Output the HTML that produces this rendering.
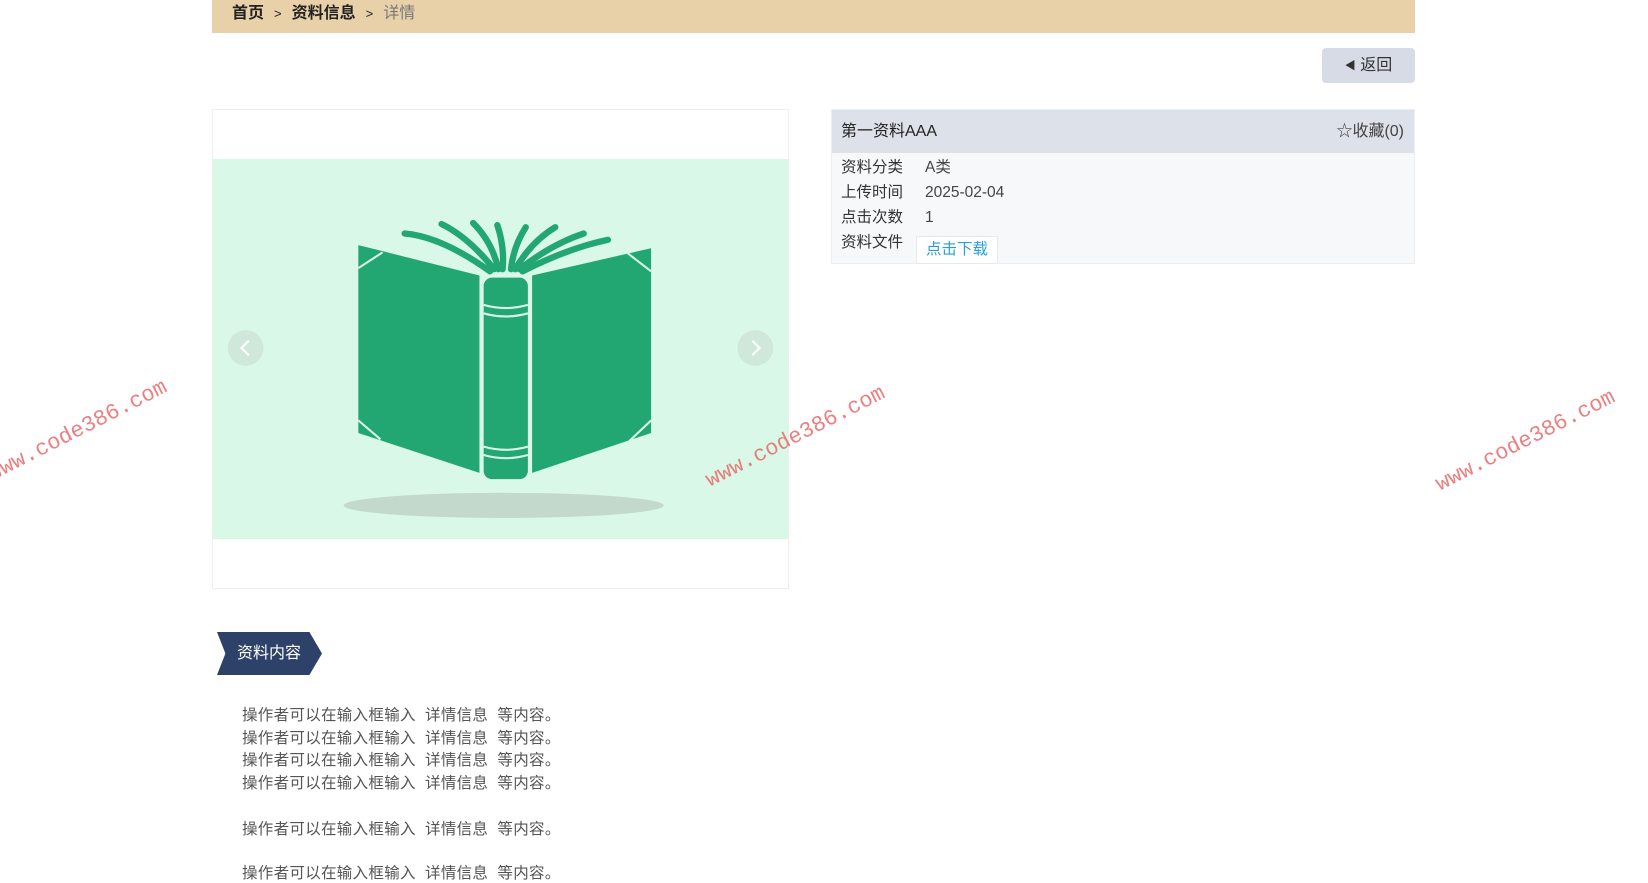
<!DOCTYPE html>
<html><head><meta charset="utf-8"><style>
*{margin:0;padding:0;box-sizing:border-box}
body{width:1648px;height:880px;background:#fff;font-family:"Liberation Sans","Noto Sans CJK SC",sans-serif;position:relative;overflow:hidden;color:#333}
.abs{position:absolute}
.bc{left:212px;top:0;width:1203px;height:33px;background:#e8d0a8;font-size:16px;line-height:28px;padding-left:20px;color:#222}
.bc b{font-weight:bold}
.bc span{margin:0 10px;font-size:13px}
.back{left:1322px;top:48px;width:93px;height:35px;background:#d6dbe6;border-radius:4px;font-size:16px;line-height:35px;text-align:center;color:#333}
.back small{font-size:11px;vertical-align:1px}
.imgp{left:212px;top:109px;width:577px;height:480px;border:1px solid #eee;background:#fff}
.card{left:831px;top:109px;width:584px;height:155px;background:#f7f8f9;border:1px solid #eceef2}
.hd{height:43px;background:#dde1e9;font-size:16px;line-height:43px;padding-left:9px;color:#222}
.hd i{position:absolute;right:10px;font-style:normal;color:#444}
.row{position:absolute;left:9px;font-size:15.5px;line-height:20px;color:#333}
.row em{font-style:normal;position:absolute;left:84px;top:0;white-space:nowrap;color:#444;line-height:20px}
.dl{left:916px;top:236px;width:82px;height:28px;background:#fff;border:1px solid #e6eaee;color:#2a9fd6;font-size:15.5px;line-height:26px;text-align:center;border-radius:2px}
.tt{left:217px;top:632px;width:105px;height:43px;background:#2e4168;clip-path:polygon(0 0,88% 0,100% 50%,88% 100%,0 100%,8% 50%);color:#fff;font-size:16px;line-height:43px;padding-left:20px}
.ct{left:242px;font-size:15.5px;color:#555;white-space:nowrap;letter-spacing:0.3px}
.wm{color:#e86a6a;font-size:22px;font-family:"Liberation Mono",monospace;transform:rotate(-27deg);transform-origin:left bottom;white-space:nowrap;opacity:.85}
</style></head><body>
<div class="abs bc"><b>首页</b><span>&gt;</span><b>资料信息</b><span>&gt;</span><i style="font-style:normal;color:#777">详情</i></div>
<div class="abs back"><small>&#9664;&#xFE0E;</small> 返回</div>
<div class="abs imgp">
<svg width="575" height="380" viewBox="203 151 546 362" preserveAspectRatio="none" style="position:absolute;left:0;top:49px">
<rect x="203" y="151" width="546" height="362" fill="#d9f8e7"/>
<ellipse cx="479" cy="481" rx="152" ry="12" fill="#c2d9cb"/>
<g fill="none" stroke="#22a672" stroke-width="6" stroke-linecap="round">
<path d="M466 258 Q420 225 385 222"/><path d="M470 256 Q445 225 420 213"/><path d="M474 256 Q468 230 450 212"/><path d="M478 256 Q480 235 473 214"/>
<path d="M486 256 Q488 235 500 216"/><path d="M490 256 Q505 230 528 216"/><path d="M494 256 Q525 232 555 222"/><path d="M497 258 Q540 236 578 228"/>
</g>
<path d="M341 233 L456 262 L456 450 L341 412 Z" fill="#22a672"/>
<path d="M506 262 L619 236 L619 412 L506 450 Z" fill="#22a672"/>
<rect x="460" y="264" width="42" height="192" rx="8" fill="#22a672"/>
<g stroke="#d9f8e7" stroke-width="2" fill="none">
<path d="M460 290 Q481 296 502 290"/><path d="M460 298 Q481 304 502 298"/><path d="M460 425 Q481 431 502 425"/><path d="M460 433 Q481 439 502 433"/>
<path d="M341 255 L364 240"/><path d="M619 258 L597 241"/><path d="M341 400 L362 418"/><path d="M619 400 L598 420"/>
</g>
<circle cx="234" cy="331" r="17" fill="#cfe8da"/><circle cx="718" cy="331" r="17" fill="#cfe8da"/>
<path d="M237 324 L230 331 L237 338" stroke="#fff" stroke-width="2" fill="none"/><path d="M715 324 L722 331 L715 338" stroke="#fff" stroke-width="2" fill="none"/>
</svg></div>
<div class="abs card"><div class="hd">第一资料AAA<i>☆收藏(0)</i></div>
<div class="row" style="top:48px">资料分类<em>A类</em></div>
<div class="row" style="top:73px">上传时间<em>2025-02-04</em></div>
<div class="row" style="top:98px">点击次数<em>1</em></div>
<div class="row" style="top:123px">资料文件</div></div>
<div class="abs dl">点击下载</div>
<div class="abs tt">资料内容</div>
<div class="abs ct" style="top:703px">操作者可以在输入框输入&nbsp; 详情信息&nbsp; 等内容。</div>
<div class="abs ct" style="top:726px">操作者可以在输入框输入&nbsp; 详情信息&nbsp; 等内容。</div>
<div class="abs ct" style="top:748px">操作者可以在输入框输入&nbsp; 详情信息&nbsp; 等内容。</div>
<div class="abs ct" style="top:771px">操作者可以在输入框输入&nbsp; 详情信息&nbsp; 等内容。</div>
<div class="abs ct" style="top:817px">操作者可以在输入框输入&nbsp; 详情信息&nbsp; 等内容。</div>
<div class="abs ct" style="top:861px">操作者可以在输入框输入&nbsp; 详情信息&nbsp; 等内容。</div>
<div class="abs wm" style="left:-5px;top:462px">www.code386.com</div>
<div class="abs wm" style="left:713px;top:468px">www.code386.com</div>
<div class="abs wm" style="left:1443px;top:472px">www.code386.com</div>
</body></html>
